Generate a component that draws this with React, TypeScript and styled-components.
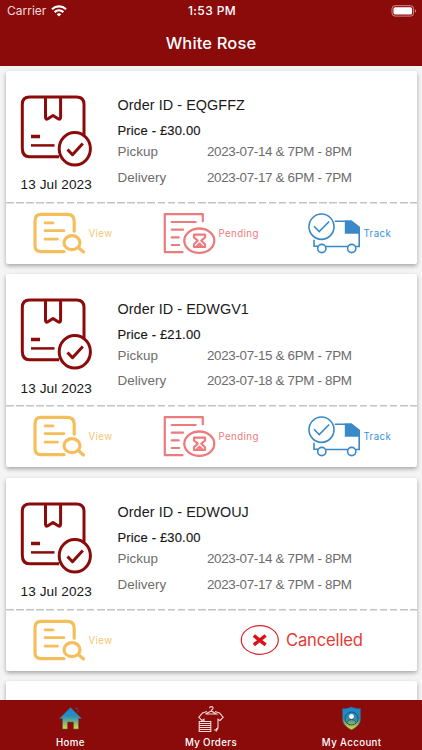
import React from 'react';
import styled, { createGlobalStyle } from 'styled-components';

const Global = createGlobalStyle`
  * { box-sizing: border-box; }
  body { margin: 0; background: #f4f4f4; overflow: hidden; }
`;

const Screen = styled.div`
  width: 422px;
  height: 750px;
  display: flex;
  flex-direction: column;
  overflow: hidden;
  background: #f4f4f4;
  font-family: 'Liberation Sans', Arial, sans-serif;
`;

const Header = styled.header`
  flex: none;
  height: 65.5px;
  background: #8b0a0a;
  color: #fff;
  font-family: Inter, sans-serif;
`;

const StatusBar = styled.div`
  display: grid;
  grid-template-columns: 1fr auto 1fr;
  align-items: center;
  height: 21.5px;
  padding: 0 5px 0 7px;
`;

const Carrier = styled.div`
  display: flex;
  align-items: center;
  gap: 5px;
  font-size: 12px;
  letter-spacing: 0;
  color: #f3dcdc;
`;

const Clock = styled.div`
  font-size: 12px;
  font-weight: 500;
  letter-spacing: 0.4px;
`;

const Battery = styled.div`
  display: flex;
  justify-content: flex-end;
`;

const Title = styled.h1`
  margin: 0;
  height: 42px;
  line-height: 42px;
  text-align: center;
  font-size: 16.5px;
  font-weight: 550;
  letter-spacing: 0.15px;
`;

const List = styled.main`
  flex: 1;
  min-height: 0;
  overflow: hidden;
  padding: 5px 5.5px 0;
  display: flex;
  flex-direction: column;
  gap: 10.5px;
`;

const Card = styled.article`
  flex: none;
  height: 193px;
  background: #fff;
  border-radius: 2px;
  box-shadow: 0 2px 4px rgba(0, 0, 0, 0.32);
`;

const Summary = styled.div`
  display: flex;
  height: 131px;
`;

const Parcel = styled.div`
  width: 112px;
  padding: 23px 0 0 13.5px;

  svg { display: block; }
`;

const OrderDate = styled.div`
  margin-top: 8.5px;
  padding-left: 1.5px;
  font-size: 13.6px;
  line-height: 18px;
  letter-spacing: 0.1px;
  color: #161616;
  white-space: nowrap;
`;

const Details = styled.div`
  padding-top: 24.5px;
  white-space: nowrap;
`;

const OrderId = styled.div`
  font-size: 14.4px;
  line-height: 20px;
  letter-spacing: 0.06px;
  color: #1b1b1b;
`;

const Price = styled.div`
  margin-top: 6px;
  margin-bottom: 1px;
  font-size: 13px;
  line-height: 19px;
  letter-spacing: 0.16px;
  color: #161616;
  -webkit-text-stroke: 0.15px #161616;
`;

const Slot = styled.div`
  display: grid;
  grid-template-columns: 89.5px auto;
  height: 25.5px;
  line-height: 22px;
  font-size: 13.4px;
  letter-spacing: 0.05px;
  color: #6c6c6c;
`;

const SlotTime = styled.span`
  letter-spacing: -0.33px;
`;

const Actions = styled.div`
  height: 62px;
  display: grid;
  grid-template-columns: 157px 145px 1fr;
  padding-top: 9px;
  background: repeating-linear-gradient(90deg, #c3c3c3 0 7.6px, transparent 7.6px 10.1px) 0 0 / 100% 1.5px no-repeat;
`;

const Action = styled.div<{ $color: string; $indent?: number }>`
  display: flex;
  align-items: flex-start;
  gap: 3px;
  padding-left: ${({ $indent = 0 }) => $indent}px;
  color: ${({ $color }) => $color};
  font: 400 9.7px/46px Inter, sans-serif;
  letter-spacing: 0.4px;
  white-space: nowrap;
`;

const Cancelled = styled.div`
  grid-column: 2 / 4;
  display: flex;
  align-items: center;
  height: 44px;
  padding-left: 77px;
  gap: 6.5px;
  color: #e43b36;
  font: 400 16.6px/24px Inter, sans-serif;
  letter-spacing: -0.16px;
`;

const TabBar = styled.nav`
  flex: none;
  height: 50.5px;
  display: grid;
  grid-template-columns: repeat(3, 1fr);
  background: #8b0a0a;
  color: #fff;
`;

const Tab = styled.div`
  display: flex;
  flex-direction: column;
  align-items: center;
  padding-top: 6.5px;
  font: 550 9.7px/14px Inter, sans-serif;
  letter-spacing: 0.38px;

  svg { display: block; margin-bottom: 2.5px; }
`;

const WifiIcon = () => (
  <svg width="16" height="12" viewBox="0 0 16 12" fill="none" stroke="#fff" strokeWidth="2.2">
    <path d="M1 4.2C5 .5 11 .5 15 4.2M3.6 7.1c2.6-2.3 6.2-2.3 8.8 0" />
    <path d="M5.7 9.2c1.4-1.2 3.2-1.2 4.6 0L8 11.6Z" fill="#fff" stroke="none" />
  </svg>
);

const BatteryIcon = () => (
  <svg width="26" height="12" viewBox="0 0 26 12">
    <rect x="1" y=".7" width="21.6" height="10.4" rx="3" fill="none" stroke="#cf8d8d" />
    <rect x="2.5" y="2.2" width="18.6" height="7.4" rx="1.6" fill="#fff" />
    <path d="M24 4.2c1.4.5 1.4 3 0 3.5Z" fill="#cf8d8d" />
  </svg>
);

const ParcelIcon = () => (
  <svg width="74" height="74" viewBox="0 0 74 74" fill="none" stroke="#8b0a0a" strokeWidth="3" strokeLinejoin="round">
    <path d="M40 62.800H10.500Q3.300 62.800 3.300 54V10.500Q3.300 3 10.500 3h47Q65 3 65 10.500V41" />
    <path d="M26.500 3V23q.1 3 2 2l5.500-3.500 5.500 3.500q2 1 2.100-2V3" />
    <path d="M12 42.500h9" strokeWidth="3.500" />
    <path d="M12 51.400H35.500" strokeWidth="2.500" />
    <ellipse cx="55.800" cy="54.700" rx="15.600" ry="16.300" />
    <path d="m48.500 55.500 5 5.200 10.300-11.300" strokeWidth="3" />
  </svg>
);

const ViewIcon = () => (
  <svg width="53" height="44" viewBox="0 0 53 44" fill="none" stroke="#f4bf5b" strokeWidth="3.200" strokeLinecap="round">
    <path d="M31 40.700H8Q2 40.700 2 34.700V10Q2 3.400 8 3.400h26q7.200 0 7.200 6.800v10" />
    <path d="M12 11.900h8M12 19.700h19M12 28.200h12.500" strokeWidth="2.700" />
    <ellipse cx="39" cy="31.700" rx="8" ry="7" />
    <path d="m45 36.200 5.500 4.800" />
  </svg>
);

const PendingIcon = () => (
  <svg width="53" height="44" viewBox="0 0 53 44" fill="none" stroke="#ed7a7c" strokeWidth="2.200" strokeLinecap="round">
    <path d="M19.500 41.200H1.800V3.200h38v7" strokeLinejoin="round" />
    <path d="M8.700 11h24M8.700 18.700h11.300M8.700 26.400h7M8.700 34h7.500" />
    <ellipse cx="36.300" cy="29.700" rx="15" ry="12.200" strokeWidth="2.300" />
    <path d="M31 23.700h11v2.800L38.300 29.700l3.700 3.500v2.800H31v-2.800l3.700-3.500-3.700-3.200Z" strokeLinejoin="round" />
    <path d="m33.500 34.700 3-3 3 3Z" fill="#ed7a7c" strokeWidth="1" />
  </svg>
);

const TruckIcon = () => (
  <svg width="53" height="44" viewBox="0 0 53 44" fill="none" stroke="#3989c9" strokeWidth="1.600">
    <ellipse cx="13.500" cy="15.700" rx="12.500" ry="12.700" />
    <path d="m6 15.300 5.200 5.200 10-10M6 28.800v6.500h4M18 35.500h22M48 35.500h3.200V16.500L43 10.300H26.800" />
    <path d="M36.800 9.500h7l8.200 6.700V22.800H36.800Z" fill="#3989c9" stroke="none" />
    <circle cx="13.800" cy="37.500" r="4.100" />
    <circle cx="43.700" cy="37.500" r="4.100" />
  </svg>
);

const CancelIcon = () => (
  <svg width="40" height="32" viewBox="0 0 40 32" fill="none" stroke="#dc2028">
    <ellipse cx="19.800" cy="16" rx="18.500" ry="14.300" strokeWidth="1.200" />
    <path d="m13.800 11.500 11.800 9.300M25.600 11.500 13.800 20.800" stroke="#dc1115" strokeWidth="3.500" />
  </svg>
);

const HomeIcon = () => (
  <svg width="26" height="27" viewBox="0 0 26 27">
    <defs>
      <linearGradient id="homeFill" x2="0" y2="1">
        <stop stopColor="#1688dc" />
        <stop offset=".4" stopColor="#268ebf" />
        <stop offset="1" stopColor="#e4dc28" />
      </linearGradient>
    </defs>
    <path d="M13.500 1.500 24.500 12.500h-3V23h-5v-7h-6v7H5.500V12.500H2.500Z" fill="url(#homeFill)" stroke="#49606a" strokeWidth=".6" />
    <path d="M17.500 2.500H21v4" fill="none" stroke="#674047" />
  </svg>
);

const ShirtIcon = () => (
  <svg width="26" height="27" viewBox="0 0 26 27" fill="none" stroke="#f5d8d8" strokeWidth="1.100">
    <path d="M11.500 2.200C12-.2 15.400.3 15 2.500c-.2 1-1.700 1.200-1.800 2.500M13.200 5 7.500 8h11Z" />
    <path d="M9 5.500 4.500 7 .8 11.300 4 14.500l2-1.200v2M17 5.500 21.500 7l3.700 4.300-3.200 3.200-2-1.200V22q-1.500 0-2 2h-2M20 22l-2 3.500" />
    <path d="M1.200 15.500h11.600M1.200 17.500h11.600M1.200 19.500h11.600M1.200 21.500h11.600M1.200 23.500h11.600M1.200 25.500h11.600M1.200 15v11M12.800 15v11" />
  </svg>
);

const AccountIcon = () => (
  <svg width="26" height="27" viewBox="0 0 26 27">
    <defs>
      <linearGradient id="shieldFill" x2="0" y2="1">
        <stop stopColor="#1688dc" />
        <stop offset=".5" stopColor="#2a8aae" />
        <stop offset="1" stopColor="#f0dc26" />
      </linearGradient>
    </defs>
    <path d="M12.500 1c3 1.400 6 1.700 9 1.700V12.500c0 6-4.500 9.200-9 11.200-4.500-2-9-5.200-9-11.200V2.700c3 0 6-.3 9-1.700Z" fill="url(#shieldFill)" stroke="#455d69" strokeWidth=".6" />
    <circle cx="12.500" cy="12.500" r="6.500" fill="none" stroke="#25536d" />
    <path d="M8 16.500c1-4 8-4 9 0" fill="none" stroke="#25536d" />
    <circle cx="12.500" cy="10.500" r="2.400" fill="#fff" />
  </svg>
);

interface Order {
  id: string;
  price: string;
  pickup: string;
  delivery: string;
  cancelled?: boolean;
}

const orders: Order[] = [
  { id: 'EQGFFZ', price: '£30.00', pickup: '2023-07-14 & 7PM - 8PM', delivery: '2023-07-17 & 6PM - 7PM' },
  { id: 'EDWGV1', price: '£21.00', pickup: '2023-07-15 & 6PM - 7PM', delivery: '2023-07-18 & 7PM - 8PM' },
  { id: 'EDWOUJ', price: '£30.00', pickup: '2023-07-14 & 7PM - 8PM', delivery: '2023-07-17 & 7PM - 8PM', cancelled: true },
];

const OrderCard = ({ order }: { order: Order }) => (
  <Card>
    <Summary>
      <Parcel>
        <ParcelIcon />
        <OrderDate>13 Jul 2023</OrderDate>
      </Parcel>
      <Details>
        <OrderId>Order ID - {order.id}</OrderId>
        <Price>Price - {order.price}</Price>
        <Slot><span>Pickup</span><SlotTime>{order.pickup}</SlotTime></Slot>
        <Slot><span>Delivery</span><SlotTime>{order.delivery}</SlotTime></Slot>
      </Details>
    </Summary>
    <Actions>
      <Action $color="#f4c66f" $indent={27}><ViewIcon />View</Action>
      {order.cancelled ? (
        <Cancelled><CancelIcon />Cancelled</Cancelled>
      ) : (
        <>
          <Action $color="#ed7a7c"><PendingIcon />Pending</Action>
          <Action $color="#3492da"><TruckIcon />Track</Action>
        </>
      )}
    </Actions>
  </Card>
);

export default function App() {
  return (
    <>
      <Global />
      <Screen>
        <Header>
          <StatusBar>
            <Carrier>Carrier<WifiIcon /></Carrier>
            <Clock>1:53 PM</Clock>
            <Battery><BatteryIcon /></Battery>
          </StatusBar>
          <Title>White Rose</Title>
        </Header>
        <List>
          {orders.map((order) => <OrderCard key={order.id} order={order} />)}
          <Card />
        </List>
        <TabBar>
          <Tab><HomeIcon />Home</Tab>
          <Tab><ShirtIcon />My Orders</Tab>
          <Tab><AccountIcon />My Account</Tab>
        </TabBar>
      </Screen>
    </>
  );
}
